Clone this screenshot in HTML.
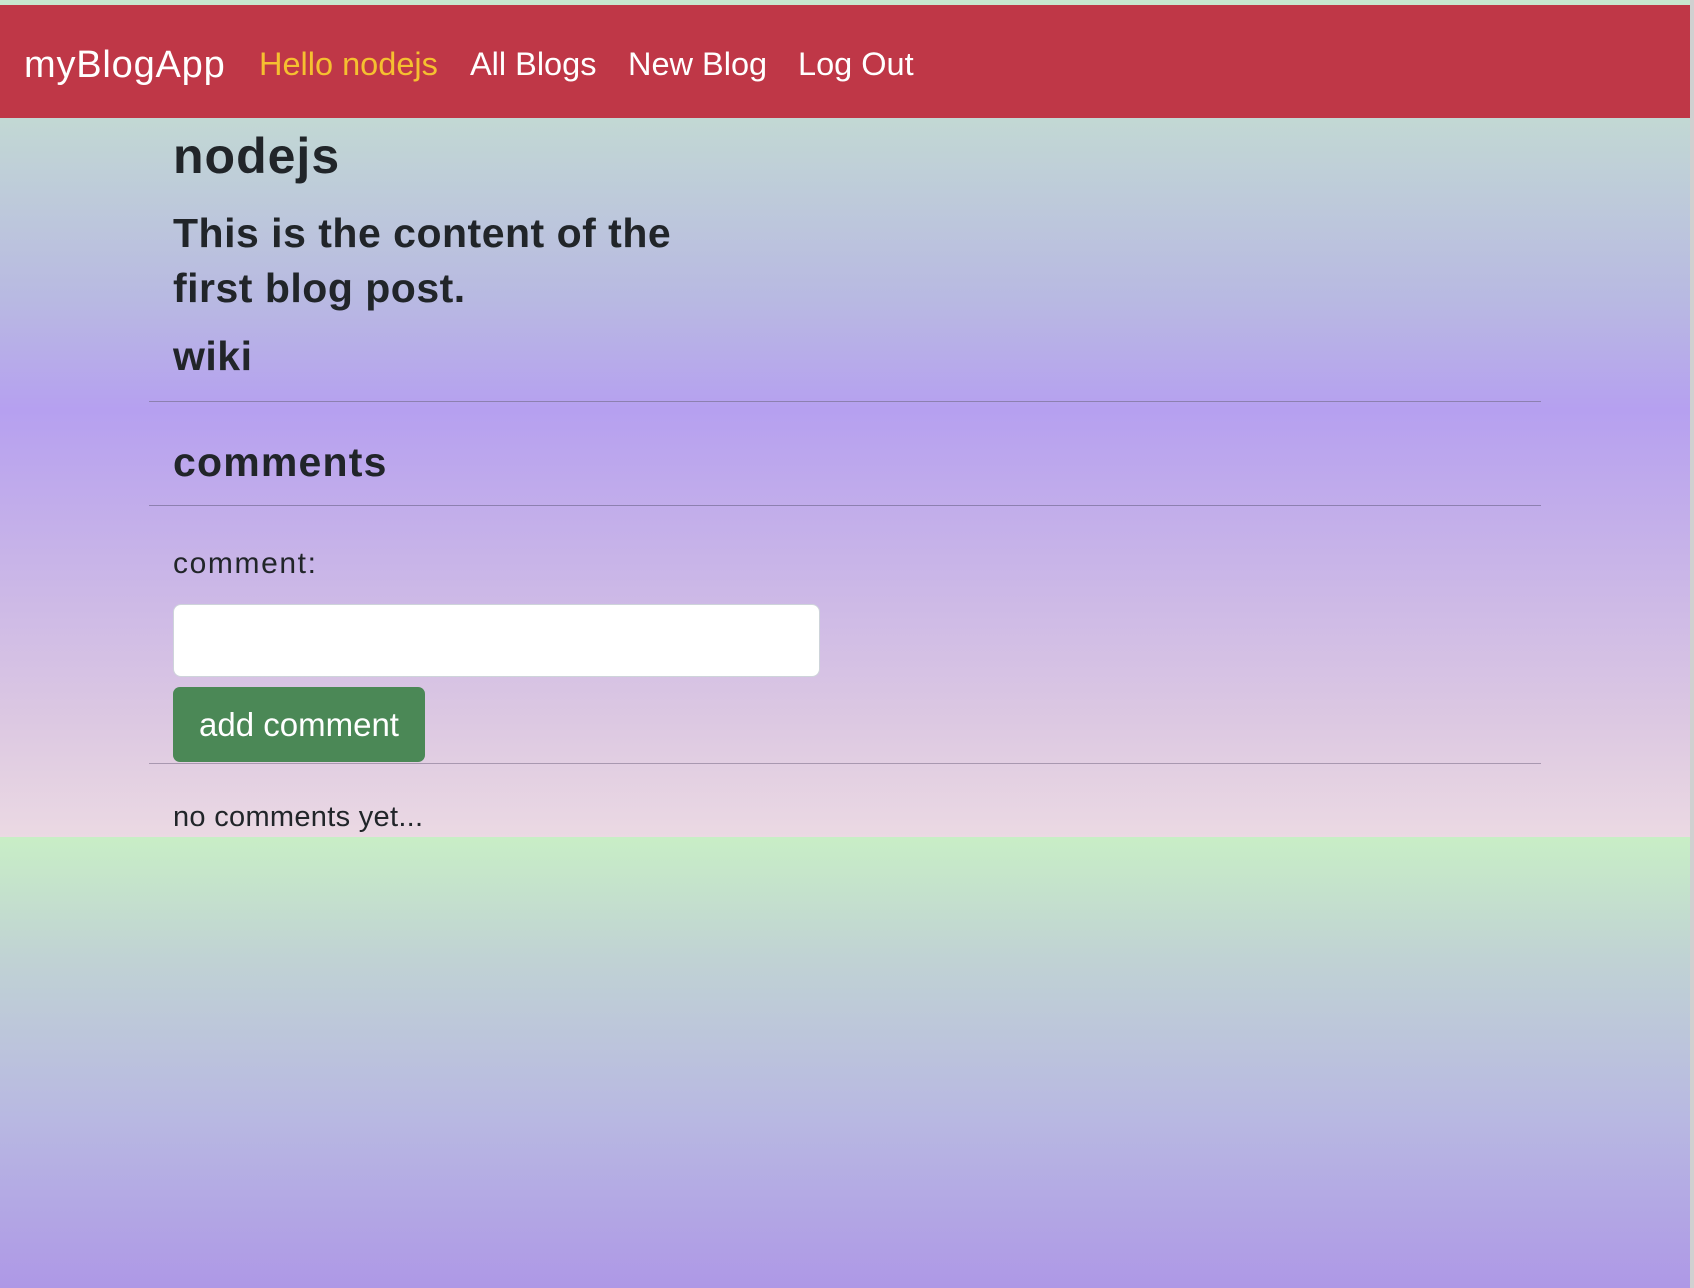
<!DOCTYPE html>
<html><head><meta charset="utf-8"><style>
html,body{margin:0;padding:0}
body{width:1694px;height:1288px;overflow:hidden;position:relative;font-family:"Liberation Sans",sans-serif;color:#212529;
background:#ccc}
.bg{position:absolute;left:0;top:0;width:1690px;height:1288px;
background:linear-gradient(180deg,#c8e6cf 0px,#c2d8d4 120px,#b8b9e2 300px,#b6a0f0 410px,#c8b4e8 560px,#dcc8e2 720px,#ebd9e3 837px,#c8eec6 837px,#c0d2d4 960px,#b8b8e2 1120px,#ae98e6 1288px)}
.strip{position:absolute;left:1690px;top:0;width:4px;height:1288px;background:#d0d0d0}
.nav{position:absolute;left:0;top:5px;width:1690px;height:113px;background:#bf3747}
.nav span{position:absolute;top:43px;font-size:32.5px;color:#fff;line-height:1}
.nav .brand{font-size:38px;top:41px;letter-spacing:0.8px}
.t{position:absolute;left:173px;margin:0;font-weight:bold;white-space:nowrap;line-height:1.1}
.hr{position:absolute;left:149px;width:1392px;height:1px;background:#8d80b0}
</style></head><body>
<div class="bg"></div><div class="strip"></div>
<div class="nav">
<span class="brand" style="left:24px">myBlogApp</span>
<span style="left:259px;color:#f5c030">Hello nodejs</span>
<span style="left:470px">All Blogs</span>
<span style="left:628px">New Blog</span>
<span style="left:798px">Log Out</span>
</div>
<div class="t" style="top:129px;font-size:50px;letter-spacing:1px">nodejs</div>
<div class="t" style="top:206px;font-size:41px;line-height:55px;letter-spacing:0.5px">This is the content of the<br>first blog post.</div>
<div class="t" style="top:334px;font-size:41px;letter-spacing:0.5px">wiki</div>
<div class="hr" style="top:401px"></div>
<div class="t" style="top:440px;font-size:41px;letter-spacing:1.2px">comments</div>
<div class="hr" style="top:505px"></div>
<div class="t" style="top:547px;font-size:30px;font-weight:400;letter-spacing:1.6px">comment:</div>
<div style="position:absolute;left:173px;top:604px;width:645px;height:71px;background:#fff;border:1px solid #ced4da;border-radius:8px"></div>
<div style="position:absolute;left:173px;top:687px;width:252px;height:75px;background:#4b8856;border-radius:7px;color:#fff;font-size:33px;line-height:75px;text-align:center">add comment</div>
<div class="hr" style="top:763px;background:#a898b0"></div>
<div class="t" style="top:802px;font-size:29px;font-weight:400;letter-spacing:0.3px">no comments yet...</div>
</body></html>
